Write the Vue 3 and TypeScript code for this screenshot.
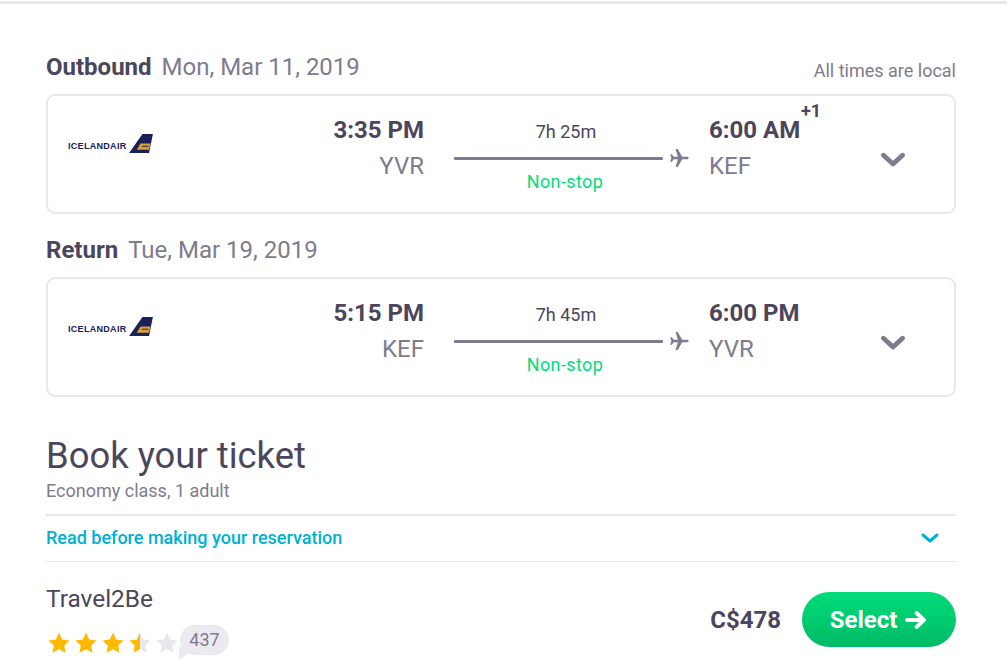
<script setup lang="ts">
interface Flight {
  label: string
  date: string
  depart: string
  from: string
  duration: string
  arrive: string
  to: string
  plus?: string
}

const flights: Flight[] = [
  { label: 'Outbound', date: 'Mon, Mar 11, 2019', depart: '3:35 PM', from: 'YVR', duration: '7h 25m', arrive: '6:00 AM', to: 'KEF', plus: '+1' },
  { label: 'Return', date: 'Tue, Mar 19, 2019', depart: '5:15 PM', from: 'KEF', duration: '7h 45m', arrive: '6:00 PM', to: 'YVR' },
]

const starPath = 'M11 .6l3.200 6.800 7.300 1-5.300 5.100 1.400 7.300L11 17.300l-6.600 3.500 1.400-7.300L.5 8.400l7.300-1z'
</script>

<template>
  <div class="page">
    <section v-for="(f, i) in flights" :key="f.label" class="leg">
      <div class="leg-head">
        <h2 class="leg-title"><strong>{{ f.label }}</strong><span>{{ f.date }}</span></h2>
        <span v-if="i === 0" class="local">All times are local</span>
      </div>
      <div class="card">
        <div class="logo">
          <span class="wordmark">Icelandair</span>
          <svg class="tail" width="24" height="19" viewBox="0 0 25 20">
            <path d="M14 0h11l-4 20H0z" fill="#1c2058" />
            <path d="M12 10h10.500l-1.600 6.500H8z" fill="#d9a033" />
            <path d="M14 12.400h6.500l-.3 1H13.200z" fill="#1c2058" />
          </svg>
        </div>
        <div class="point point-from">
          <div class="time">{{ f.depart }}</div>
          <div class="code">{{ f.from }}</div>
        </div>
        <div class="route">
          <div class="duration">{{ f.duration }}</div>
          <div class="line-row">
            <div class="line"></div>
            <svg class="plane" width="20" height="20" viewBox="0 0 20 20">
              <path d="M19.800 10c0-.8-.9-1.300-1.900-1.300h-4.600L8.800.8H6.700l2.200 7.900H4.700L2.900 6.100H1.300l1 3.900-1 3.900h1.600l1.800-2.600h4.200l-2.200 7.900h2.100l4.500-7.900h4.600c1 0 1.900-.5 1.900-1.300z" fill="#7f7b8f" />
            </svg>
          </div>
          <div class="stops">Non-stop</div>
        </div>
        <div class="point point-to">
          <div class="time">{{ f.arrive }}<sup v-if="f.plus" class="plus">{{ f.plus }}</sup></div>
          <div class="code">{{ f.to }}</div>
        </div>
        <svg class="chev" width="26" height="16" viewBox="0 0 26 16">
          <path d="M3.500 3.200L13 12l9.500-8.800" fill="none" stroke="#7f7b8f" stroke-width="4.800" stroke-linecap="round" stroke-linejoin="round" />
        </svg>
      </div>
    </section>

    <h1 class="book">Book your ticket</h1>
    <div class="class-line">Economy class, 1 adult</div>

    <div class="read">
      <span>Read before making your reservation</span>
      <svg width="20" height="12" viewBox="0 0 20 12">
        <path d="M3 3l7 6 7-6" fill="none" stroke="#00b1d2" stroke-width="3" stroke-linecap="round" stroke-linejoin="round" />
      </svg>
    </div>

    <div class="offer">
      <div class="agent">
        <div class="agent-name">Travel2Be</div>
        <div class="rating">
          <svg v-for="n in 5" :key="n" class="star" width="22" height="22" viewBox="0 0 22 22">
            <defs v-if="n === 4">
              <linearGradient id="half">
                <stop offset="50%" stop-color="#ffb900" />
                <stop offset="50%" stop-color="#e8e7ee" />
              </linearGradient>
            </defs>
            <path :d="starPath" :fill="n < 4 ? '#ffb900' : n === 4 ? 'url(#half)' : '#e8e7ee'" />
          </svg>
          <div class="bubble">437</div>
        </div>
      </div>
      <div class="buy">
        <span class="price">C$478</span>
        <button class="select" type="button">
          Select
          <svg width="24" height="20" viewBox="0 0 24 20">
            <path d="M3 10h17M12.500 3L20 10l-7.500 7" fill="none" stroke="#fff" stroke-width="3.800" stroke-linecap="round" stroke-linejoin="round" />
          </svg>
        </button>
      </div>
    </div>
  </div>
</template>

<style scoped>
.page {
  box-sizing: border-box;
  height: 670px;
  overflow: hidden;
  margin-top: 1px;
  border-top: 3px solid #e8e7ee;
  padding: 48px 51px 0 46px;
  font-family: Roboto, "Liberation Sans", sans-serif;
  color: #4b465c;
  background: #fff;
}
.leg { margin-bottom: 21px; }
.leg-head {
  display: flex;
  justify-content: space-between;
  align-items: flex-end;
  height: 30px;
  margin-bottom: 12px;
}
.leg-title {
  margin: 0;
  display: flex;
  gap: 10px;
  font-size: 24px;
  line-height: 30px;
  font-weight: 400;
  color: #7f7b8f;
}
.leg-title strong { font-weight: 700; color: #4b465c; }
.local { font-size: 18px; line-height: 22px; color: #7f7b8f; }
.card {
  box-sizing: border-box;
  height: 120px;
  border: 2px solid #e8e7ee;
  border-radius: 9px;
  display: flex;
  align-items: flex-start;
  background: #fff;
}
.logo {
  width: 262px;
  margin-left: 20px;
  padding-top: 37px;
  display: flex;
  align-items: flex-end;
  height: 20px;
  flex: none;
}
.wordmark {
  font-family: "Liberation Sans", sans-serif;
  font-weight: 700;
  font-size: 9px;
  line-height: 10px;
  letter-spacing: 0.3px;
  text-transform: uppercase;
  color: #1c2058;
  margin-bottom: 2px;
}
.tail { margin-left: 2px; width: 24px; height: 19px; }
.point { flex: none; padding-top: 19px; }
.point-from { width: 94px; text-align: right; margin-right: 30px; }
.point-to { width: 172px; margin-left: 20px; }
.time { font-size: 24px; line-height: 30px; font-weight: 700; color: #4b465c; position: relative; }
.code { font-size: 24px; line-height: 30px; margin-top: 6px; color: #7f7b8f; }
.plus {
  position: absolute;
  left: 92px;
  top: -15px;
  font-size: 18px;
  line-height: 22px;
  font-weight: 700;
  vertical-align: baseline;
}
.route { flex: none; width: 235px; position: relative; text-align: center; padding-top: 24px; }
.duration { font-size: 18px; line-height: 24px; width: 224px; color: #4b465c; }
.line-row { display: flex; align-items: center; height: 20px; margin-top: 4px; }
.line { width: 211px; height: 3px; background: #7f7b8f; border-radius: 1px; }
.plane { margin-left: 6px; }
.stops { width: 222px; font-size: 18px; line-height: 24px; letter-spacing: 0.4px; color: #00dc79; margin-top: 2px; }
.chev { flex: none; margin-top: 56px; margin-left: -1px; }
.book {
  margin: 37px 0 0;
  font-size: 36.4px;
  line-height: 44px;
  font-weight: 400;
  color: #4b465c;
}
.class-line { font-size: 18px; line-height: 24px; color: #7f7b8f; margin-top: 1px; }
.read {
  box-sizing: border-box;
  margin-top: 11px;
  height: 48px;
  border-top: 2px solid #e8e7ee;
  border-bottom: 1px solid #e8e7ee;
  display: flex;
  align-items: center;
  justify-content: space-between;
  padding-right: 16px;
  padding-bottom: 2px;
  color: #00b1d2;
  font-size: 18px;
  font-weight: 500;
}
.offer { display: flex; justify-content: space-between; }
.agent-name { font-size: 24.4px; line-height: 30px; margin-top: 22px; color: #4b465c; }
.rating { display: flex; align-items: center; margin-top: 16px; margin-left: 2px; position: relative; }
.star { width: 22px; height: 22px; margin-right: 5px; flex: none; }
.bubble {
  position: relative;
  height: 30px;
  width: 49px;
  margin-left: -3px;
  border-radius: 15px;
  background: #eceaf0;
  color: #7f7b8f;
  font-size: 18px;
  line-height: 29px;
  text-align: center;
  margin-top: -5px;
}
.bubble::after {
  content: "";
  position: absolute;
  left: -1px;
  bottom: -6px;
  width: 8px;
  height: 14px;
  background: #eceaf0;
  clip-path: polygon(0 100%, 100% 50%, 100% 0, 0 0);
}
.buy { display: flex; align-items: center; margin-top: 30px; align-self: flex-start; }
.price { font-size: 24px; font-weight: 700; color: #4b465c; margin-right: 21px; }
.select {
  display: flex;
  align-items: center;
  justify-content: center;
  gap: 7px;
  width: 154px;
  height: 55px;
  border: 0;
  border-radius: 28px;
  background: linear-gradient(180deg, #00dc79, #00bb66);
  color: #fff;
  font-family: inherit;
  font-size: 24px;
  font-weight: 700;
  padding: 0;
}
</style>
